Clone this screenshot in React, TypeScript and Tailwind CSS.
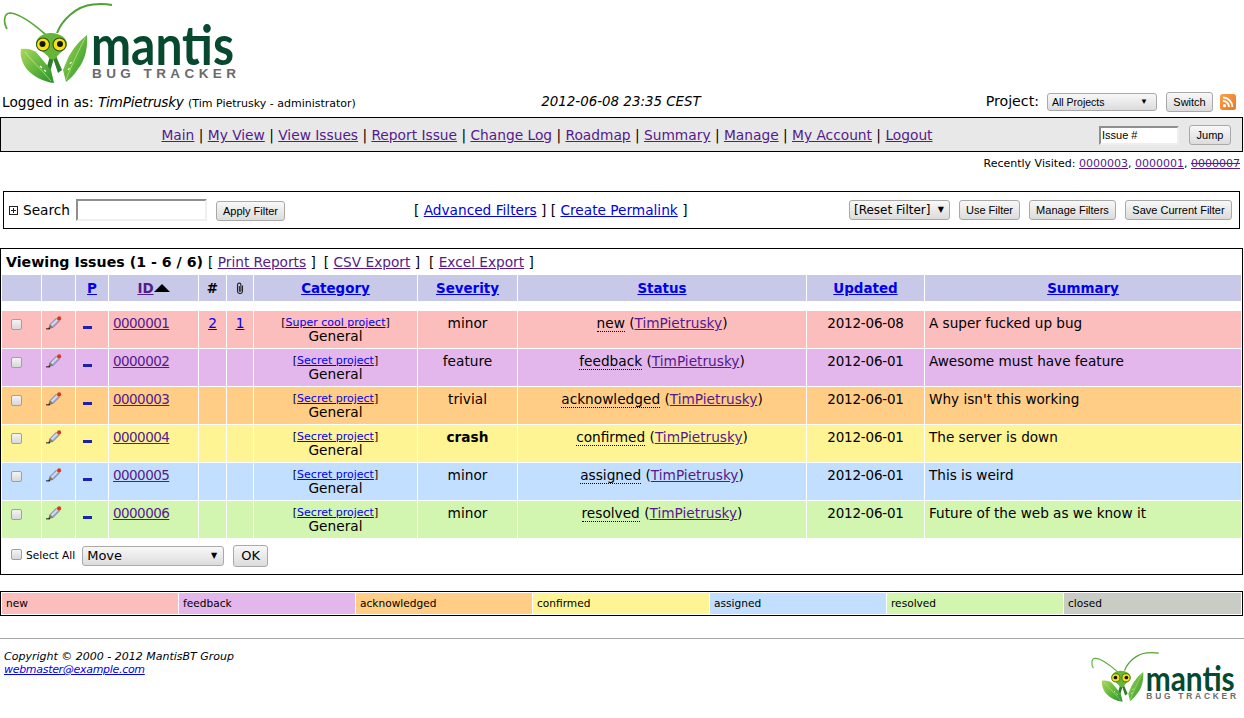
import React from "react";

const rows = [
  { id: "0000001", n: "2", a: "1", project: "Super cool project", sev: "minor", status: "new", date: "2012-06-08", summary: "A super fucked up bug", bg: "bg-[#fcbdbd]" },
  { id: "0000002", n: "", a: "", project: "Secret project", sev: "feature", status: "feedback", date: "2012-06-01", summary: "Awesome must have feature", bg: "bg-[#e3b7eb]" },
  { id: "0000003", n: "", a: "", project: "Secret project", sev: "trivial", status: "acknowledged", date: "2012-06-01", summary: "Why isn't this working", bg: "bg-[#ffcd85]" },
  { id: "0000004", n: "", a: "", project: "Secret project", sev: "crash", status: "confirmed", date: "2012-06-01", summary: "The server is down", bg: "bg-[#fff494]" },
  { id: "0000005", n: "", a: "", project: "Secret project", sev: "minor", status: "assigned", date: "2012-06-01", summary: "This is weird", bg: "bg-[#c2dfff]" },
  { id: "0000006", n: "", a: "", project: "Secret project", sev: "minor", status: "resolved", date: "2012-06-01", summary: "Future of the web as we know it", bg: "bg-[#d2f5b0]" },
];

const legend = [
  ["new", "bg-[#fcbdbd]"],
  ["feedback", "bg-[#e3b7eb]"],
  ["acknowledged", "bg-[#ffcd85]"],
  ["confirmed", "bg-[#fff494]"],
  ["assigned", "bg-[#c2dfff]"],
  ["resolved", "bg-[#d2f5b0]"],
  ["closed", "bg-[#c9ccc4]"],
];

const widths = ["w-[39px]", "w-[33px]", "w-[32px]", "w-[89px]", "w-[27px]", "w-[26px]", "w-[163px]", "w-[99px]", "w-[288px]", "w-[117px]", "w-auto"];

function Logo({ small, uid }: { small?: boolean; uid: string }) {
  const s = small ? "w-[147px] h-[55px] block overflow-visible" : "w-[236px] h-[88px] block overflow-visible";
  return (
    <svg viewBox="0 0 236 88" className={s}>
      <defs>
        <linearGradient id={uid} x1="0" y1="0" x2="1" y2="1">
          <stop offset="0" stopColor="#a9d95c" />
          <stop offset="0.55" stopColor="#5fb43a" />
          <stop offset="1" stopColor="#24902f" />
        </linearGradient>
      </defs>
      <path d="M46 35C36 26 22 14 10 13C4 13 3 22 7 29" fill="none" stroke="#55a833" strokeWidth="1.7" />
      <path d="M57 33C62 20 76 6 93 4.500C100 3.800 106 4 112 5" fill="none" stroke="#4fa332" strokeWidth="2" />
      <path d="M50 56L46 70L50 72L54 58ZM56 56L62 70L58 73L53 58Z" fill="#2f7d2c" />
      <path d="M21 49C28 48 34 50 37 53L51 70L54 83C44 82 30 76 24 65C21 59 20 54 21 49Z" fill={`url(#${uid})`} />
      <path d="M87 35C88 48 85 60 78 69C74 75 70 79 66 82L63 70L68 58C72 50 79 41 87 35Z" fill={`url(#${uid})`} />
      <path d="M25 52C31 60 40 68 51 81" fill="none" stroke="#e0f2a8" strokeWidth="0.6" />
      <path d="M85 38C79 50 72 64 66 80" fill="none" stroke="#d8ee9c" strokeWidth="0.6" />
      <path d="M36 44C36 38 42 33 51 33C60 33 67 38 67 44C67 50 59 52 56 58C54 60 51 60 49 58C46 52 36 50 36 44Z" fill="#66b53a" />
      <circle cx="43" cy="44.500" r="6.500" fill="#f5e216" stroke="#31500f" strokeWidth="1.100" />
      <circle cx="59.500" cy="44.500" r="6.500" fill="#f5e216" stroke="#31500f" strokeWidth="1.100" />
      <circle cx="42.500" cy="44" r="3" fill="#15150c" />
      <circle cx="60" cy="44" r="3" fill="#15150c" />
      <path d="M40 66l2 2M44 70l2 1.500M70 64l1.500-2M68 70l1.500-2" stroke="#ffffff" strokeWidth="1.200" />
      <text x="91" y="65" fontFamily="Lato, 'Liberation Sans', sans-serif" fontWeight="700" fontSize="55" fill="#06492f" textLength="143" lengthAdjust="spacingAndGlyphs">mantis</text>
      <text x="92" y="78" fontFamily="'Liberation Sans', sans-serif" fontWeight="700" fontSize="13.500" fill="#6a6a6a" textLength="144" lengthAdjust="spacing">BUG TRACKER</text>
    </svg>
  );
}

function Btn({ children, cls = "" }: { children: React.ReactNode; cls?: string }) {
  return (
    <button className={`h-[20px] px-[7px] rounded-[3px] border border-[#a9a9a9] bg-gradient-to-b from-[#f8f8f8] to-[#dcdcdc] text-[11px] leading-none text-black font-['Liberation_Sans',sans-serif] ${cls}`}>
      {children}
    </button>
  );
}

function Pencil() {
  return (
    <svg viewBox="0 0 18 16" className="w-[16px] h-[14.200px] block">
      <path d="M0 14.500L4.500 14.500" stroke="#111" strokeWidth="1.100" />
      <path d="M3 14L4.500 9.500L11.500 2.500L15 6L8 13Z" fill="#98a2d6" stroke="#50537e" strokeWidth="0.500" />
      <path d="M5.500 10L12 3.500L13.500 5L7 11.500Z" fill="#d4d9f0" />
      <path d="M11.500 2.500L13 1.500L16 4.500L15 6Z" fill="#e9b23c" />
      <circle cx="14.800" cy="2.700" r="2.300" fill="#d9352a" />
      <path d="M3 14L4.500 9.500L8 13Z" fill="#8f7a2e" />
      <path d="M2.800 15L3.400 13L5 14Z" fill="#111" />
    </svg>
  );
}

function Check() {
  return <span className="block w-[11px] h-[11px] rounded-[2px] border border-[#a0a0a0] bg-gradient-to-b from-[#f4f4f4] to-[#d8d8d8]" />;
}

export default function App() {
  return (
    <div className="w-[1244px] h-[718px] bg-white text-black overflow-hidden font-['DejaVu_Sans',sans-serif] text-[13.7px]">
      <div className="h-[88px]"><Logo uid="logoA" /></div>

      <div className="h-[29px] flex items-center pl-[2px] pr-[8px]">
        <div className="w-[420px] whitespace-nowrap">
          Logged in as: <i className="tracking-[-0.25px]">TimPietrusky</i> <span className="text-[11px]">(Tim Pietrusky - administrator)</span>
        </div>
        <div className="w-[398px] text-center italic text-[13.4px] whitespace-nowrap">2012-06-08 23:35 CEST</div>
        <div className="flex-1 flex items-center justify-end">
          <span className="mr-[8px] mb-[2px] text-[14.200px]">Project:</span>
          <div className="w-[110px] h-[18px] mr-[9px] flex items-center justify-between pl-[4px] pr-[4px] rounded-[3px] border border-[#a9a9a9] bg-gradient-to-b from-[#f8f8f8] to-[#dcdcdc] text-[10.5px] font-['Liberation_Sans',sans-serif]">
            <span>All Projects</span><span className="text-[8px] pr-[4px]">▼</span>
          </div>
          <Btn cls="w-[47px] !px-0 mr-[7px]">Switch</Btn>
          <svg viewBox="0 0 16 16" className="w-[16px] h-[16px]">
            <defs>
              <linearGradient id="rssG" x1="0" y1="0" x2="1" y2="1">
                <stop offset="0" stopColor="#f7a14c" />
                <stop offset="1" stopColor="#e9781f" />
              </linearGradient>
            </defs>
            <rect width="16" height="16" rx="2.500" fill="url(#rssG)" />
            <circle cx="4.500" cy="11.700" r="1.600" fill="#fff" />
            <path d="M3 7a6 6 0 0 1 6 6M3 3.600a9.400 9.400 0 0 1 9.400 9.400" fill="none" stroke="#fff" strokeWidth="2" />
          </svg>
        </div>
      </div>

      <div className="h-[35px] mr-[1px] border border-black bg-[#e8e8e8] flex items-center relative">
        <div className="w-[1092px] text-center whitespace-nowrap mt-[2px] text-[13.770px]">
          {["Main", "My View", "View Issues", "Report Issue", "Change Log", "Roadmap", "Summary", "Manage", "My Account", "Logout"].map((m, i) => (
            <React.Fragment key={m}>
              {i > 0 && " | "}
              <a className="underline text-[#551a8b]">{m}</a>
            </React.Fragment>
          ))}
        </div>
        <div className="absolute right-[11px] top-[7px] flex items-center">
          <div className="w-[80px] h-[19px] mr-[10px] border-2 border-t-[#8f8f8f] border-l-[#8f8f8f] border-r-[#efefef] border-b-[#efefef] bg-white text-[11px] font-['Liberation_Sans',sans-serif] leading-[15px] pl-[1px]">Issue #</div>
          <Btn cls="w-[42px] !px-0">Jump</Btn>
        </div>
      </div>

      <div className="h-[20px] pt-[2px] pr-[4px] text-right text-[11px] leading-[20px] whitespace-nowrap">
        Recently Visited: <a className="underline text-[#551a8b]">0000003</a>, <a className="underline text-[#551a8b]">0000001</a>, <a className="[text-decoration-line:underline_line-through] text-[#551a8b]">0000007</a>
      </div>

      <div className="h-[38px] mt-[19px] ml-[3px] mr-[4px] border border-black flex items-center relative">
        <div className="flex items-center w-[380px]">
          <svg viewBox="0 0 9 9" className="ml-[5px] mr-[5px] w-[9px] h-[9px]">
            <rect x="0.500" y="0.500" width="8" height="8" fill="none" stroke="#222" strokeWidth="1" />
            <path d="M2 4.500H7M4.500 2V7" stroke="#222" strokeWidth="1" />
          </svg>
          <span>Search</span>
          <div className="ml-[6px] w-[131px] h-[22px] border-2 border-t-[#8f8f8f] border-l-[#8f8f8f] border-r-[#efefef] border-b-[#efefef] bg-white" />
          <Btn cls="ml-[9px] w-[69px] !px-0 mt-[2px]">Apply Filter</Btn>
        </div>
        <div className="absolute left-[410px] whitespace-nowrap">
          [ <a className="underline text-[#0000ee]">Advanced Filters</a> ] [ <a className="underline text-[#0000ee]">Create Permalink</a> ]
        </div>
        <div className="absolute right-[7px] top-[8px] flex items-center">
          <div className="w-[101px] h-[20px] mr-[9px] flex items-center justify-between pl-[4px] rounded-[3px] border border-[#a9a9a9] bg-gradient-to-b from-[#f8f8f8] to-[#dcdcdc] text-[12px]">
            <span>[Reset Filter]</span><span className="text-[8px] pr-[5px]">▼</span>
          </div>
          <Btn cls="w-[61px] !px-0 mr-[9px]">Use Filter</Btn>
          <Btn cls="w-[87px] !px-0 mr-[9px]">Manage Filters</Btn>
          <Btn cls="w-[107px] !px-0">Save Current Filter</Btn>
        </div>
      </div>

      <div className="h-[327px] mt-[19px] mr-[1px] border border-black px-[1px]">
        <div className="h-[26px] pl-[4px] flex items-center whitespace-nowrap">
          <b className="text-[14.200px] mt-[1px]">Viewing Issues (1 - 6 / 6)</b>
          <span className="ml-[5px]">[ <a className="underline text-[#551a8b]">Print Reports</a> ]</span>
          <span className="ml-[8px]">[ <a className="underline text-[#551a8b]">CSV Export</a> ]</span>
          <span className="ml-[9px]">[ <a className="underline text-[#551a8b]">Excel Export</a> ]</span>
        </div>

        <div className="flex gap-[1px] h-[26px] font-bold text-center leading-[27px] text-[13.450px]">
          <div className={`${widths[0]} bg-[#c8c8e8]`} />
          <div className={`${widths[1]} bg-[#c8c8e8]`} />
          <div className={`${widths[2]} bg-[#c8c8e8]`}><a className="underline text-[#0000ee]">P</a></div>
          <div className={`${widths[3]} bg-[#c8c8e8] flex justify-center items-center`}>
            <a className="underline text-[#551a8b]">ID</a>
            <svg viewBox="0 0 16 8" className="w-[16px] h-[8px]"><path d="M0 8L8 0L16 8Z" fill="#000" /></svg>
          </div>
          <div className={`${widths[4]} bg-[#c8c8e8]`}>#</div>
          <div className={`${widths[5]} bg-[#c8c8e8] flex items-center justify-center`}>
            <svg viewBox="0 0 8 12" className="w-[8px] h-[12px]">
              <path d="M6.500 3.500V9a2.500 2.500 0 0 1-5 0V2.800a1.700 1.700 0 0 1 3.400 0V8.500a.8.800 0 0 1-1.600 0V4" fill="none" stroke="#222" strokeWidth="1.100" />
            </svg>
          </div>
          {["Category", "Severity", "Status", "Updated"].map((h, i) => (
            <div key={h} className={`${widths[6 + i]} bg-[#c8c8e8]`}><a className="underline text-[#0000ee]">{h}</a></div>
          ))}
          <div className="flex-1 bg-[#c8c8e8]"><a className="underline text-[#0000ee]">Summary</a></div>
        </div>

        <div className="h-[10px]" />

        {rows.map((r) => (
          <div key={r.id} className="flex gap-[1px] h-[37px] mb-[1px] leading-[17px] text-center">
            <div className={`${widths[0]} ${r.bg} pl-[9px] pt-[8px]`}><Check /></div>
            <div className={`${widths[1]} ${r.bg} pl-[4px] pt-[5px]`}><Pencil /></div>
            <div className={`${widths[2]} ${r.bg} pl-[7px] pt-[15px]`}>
              <div className="w-[9px] h-[3px] bg-[#1f1fb0]" />
            </div>
            <div className={`${widths[3]} ${r.bg} pt-[4px] text-left pl-[4px] tracking-[-0.55px] text-[13.5px]`}><a className="underline text-[#551a8b]">{r.id}</a></div>
            <div className={`${widths[4]} ${r.bg} pt-[4px]`}><a className="underline text-[#0000ee]">{r.n}</a></div>
            <div className={`${widths[5]} ${r.bg} pt-[4px]`}><a className="underline text-[#0000ee]">{r.a}</a></div>
            <div className={`${widths[6]} ${r.bg} pt-[5px] whitespace-nowrap`}>
              <div className="text-[11px] leading-[14px]">[<a className="underline text-[#0000ee]">{r.project}</a>]</div>
              <div className="leading-[14px] -mt-[1px]">General</div>
            </div>
            <div className={`${widths[7]} ${r.bg} pt-[4px] ${r.sev === "crash" ? "font-bold" : ""}`}>{r.sev}</div>
            <div className={`${widths[8]} ${r.bg} pt-[4px] whitespace-nowrap`}>
              <span className="border-b border-dotted border-black">{r.status}</span> (<a className="underline text-[#551a8b]">TimPietrusky</a>)
            </div>
            <div className={`${widths[9]} ${r.bg} pt-[4px] text-[13.5px] tracking-[-0.2px]`}>{r.date}</div>
            <div className={`flex-1 ${r.bg} pt-[4px] text-left pl-[4px] text-[13.6px]`}>{r.summary}</div>
          </div>
        ))}

        <div className="flex items-center h-[33px] pl-[9px] mt-[1px]">
          <span className="mb-[3px]"><Check /></span>
          <span className="ml-[4px] text-[10.6px] mt-[1px]">Select All</span>
          <div className="ml-[7px] w-[142px] h-[20px] flex items-center justify-between pl-[4px] pr-[6px] rounded-[3px] border border-[#a9a9a9] bg-gradient-to-b from-[#f8f8f8] to-[#dcdcdc] text-[13px]">
            <span>Move</span><span className="text-[8px]">▼</span>
          </div>
          <button className="ml-[9px] w-[35px] h-[22px] rounded-[3px] border border-[#a9a9a9] bg-gradient-to-b from-[#f8f8f8] to-[#dcdcdc] text-[13px] leading-none">OK</button>
        </div>
      </div>

      <div className="h-[25px] mt-[16px] mr-[1px] border border-black p-[1px] flex gap-[1px]">
        {legend.map(([l, c], i) => (
          <div key={l} className={`${i === 6 ? "flex-1" : "w-[176px]"} ${c} text-[10.6px] pl-[4px] leading-[21px]`}>{l}</div>
        ))}
      </div>

      <div className="h-[1px] mt-[22px] bg-[#a6a6a6]" />

      <div className="flex justify-between">
        <div className="pl-[4px] pt-[11px] text-[11px] leading-[13px] italic">
          <div>Copyright © 2000 - 2012 MantisBT Group</div>
          <a className="underline text-[#0000ee] tracking-[-0.3px]">webmaster@example.com</a>
        </div>
        <div className="mt-[11px] mr-[8px]"><Logo small uid="logoB" /></div>
      </div>
    </div>
  );
}
